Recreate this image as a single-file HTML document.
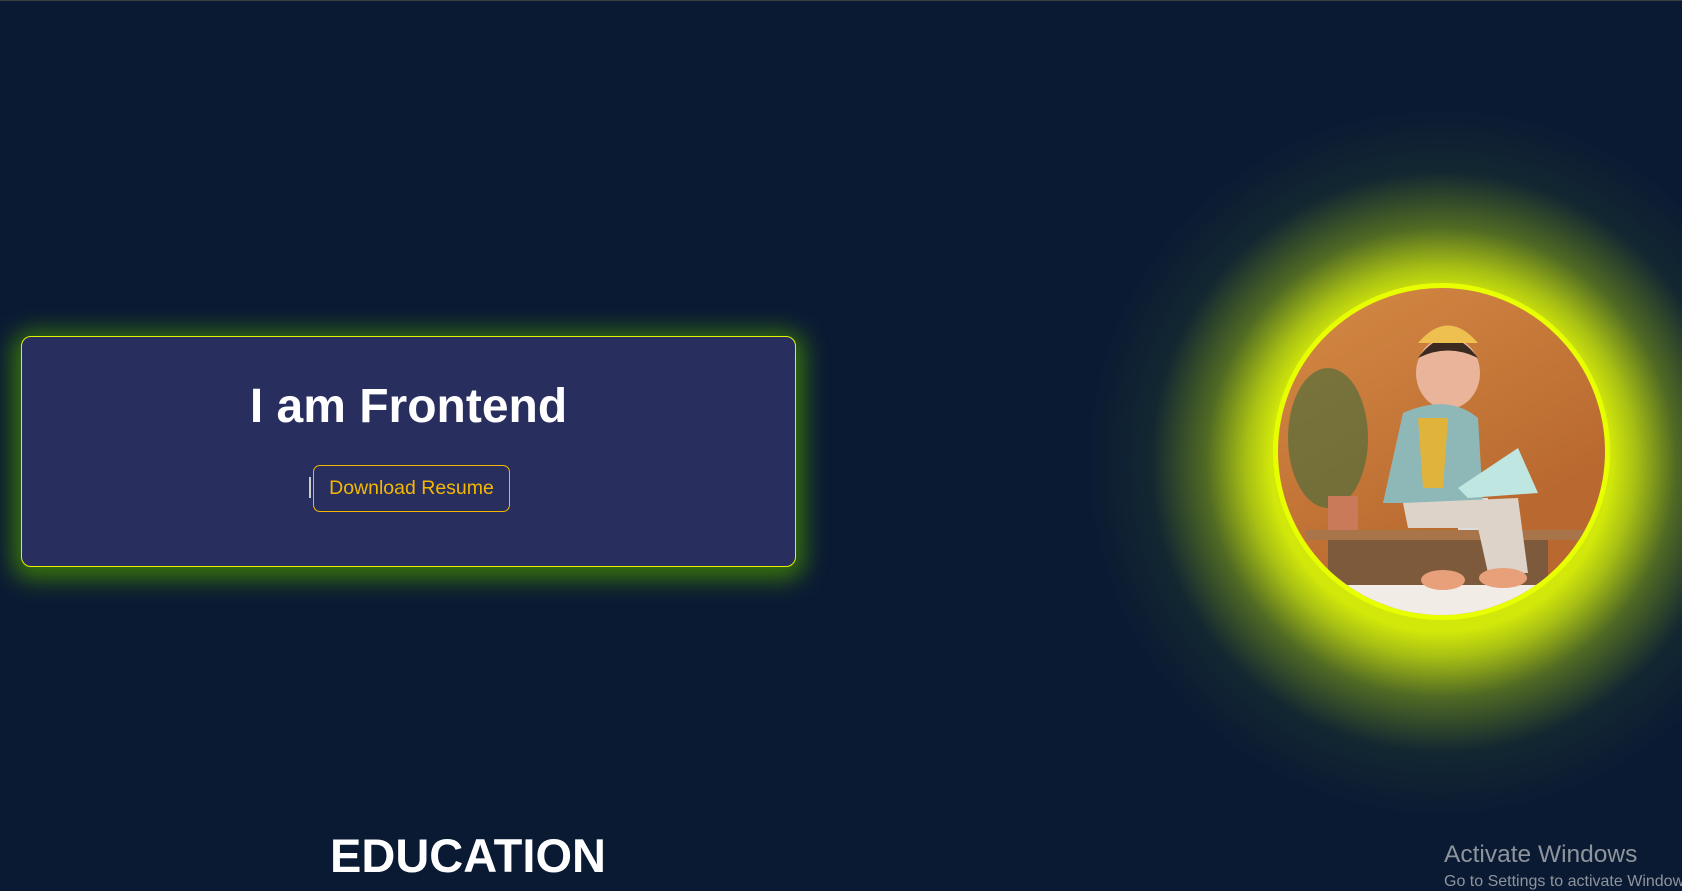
<!DOCTYPE html>
<html><head><meta charset="utf-8"><style>
html,body{margin:0;padding:0;width:1682px;height:889px;overflow:hidden;background:#0a1a33;font-family:"Liberation Sans",sans-serif;}
.top{position:absolute;left:0;top:0;width:1682px;height:1px;background:#3a4040;}
.box{position:absolute;left:21px;top:336px;width:775px;height:231px;box-sizing:border-box;background:#282f5f;border:1px solid #e6f000;border-radius:10px;box-shadow:0 4px 24px 8px rgba(70,140,0,0.8);}
h1{position:absolute;left:0;width:100%;top:42px;margin:0;text-align:center;color:#fff;font-size:48px;font-weight:600;}
.btn{position:absolute;left:291px;top:128px;width:197px;height:47px;box-sizing:border-box;border:1px solid #f5b800;border-radius:7px;color:#f5b800;font-size:19.5px;line-height:45px;text-align:center;}
.cur{position:absolute;left:287px;top:140px;width:2px;height:21px;background:#ccc;}
.glow{position:absolute;left:1041px;top:62px;width:800px;height:800px;background:radial-gradient(circle at center,rgba(215,235,10,1) 0px,rgba(210,232,10,1) 170px,rgba(195,220,15,0.85) 195px,rgba(150,185,20,0.5) 235px,rgba(60,100,40,0.18) 290px,rgba(10,26,51,0) 355px);}
.circ{position:absolute;left:1273px;top:283px;width:337px;height:337px;box-sizing:border-box;border-radius:50%;border:5px solid #e8ff00;overflow:hidden;background:linear-gradient(150deg,#d58a45,#b9692f 70%);}
.edu{position:absolute;left:0;width:936px;top:828px;text-align:center;color:#fff;font-size:47px;font-weight:700;}
.aw{position:absolute;left:1444px;top:841px;color:#8e949c;font-size:24.5px;}
.aw2{position:absolute;left:1444px;top:873px;color:#8e949c;font-size:16px;white-space:nowrap;}
</style></head><body>
<div class="top"></div>
<div class="glow"></div>
<div class="circ">
<svg width="337" height="337" viewBox="0 0 337 337">
<ellipse cx="50" cy="150" rx="40" ry="70" fill="#3f6a3a" opacity=".6"/>
<rect x="0" y="290" width="337" height="60" fill="#f2ece6"/>
<rect x="28" y="242" width="280" height="10" fill="#a8754a"/>
<rect x="50" y="252" width="220" height="45" fill="#7e5a3c"/>
<rect x="50" y="208" width="30" height="34" fill="#c97a58"/>
<rect x="180" y="210" width="30" height="32" fill="#ddd"/>
<ellipse cx="170" cy="85" rx="32" ry="36" fill="#e9b49a"/>
<path d="M140 70 Q170 30 200 70 Q170 55 140 70Z" fill="#3a2a20"/>
<path d="M140 55 Q170 20 200 55Z" fill="#eec050"/>
<path d="M105 215 L125 125 Q170 105 200 130 L205 215Z" fill="#8eb8b8"/>
<path d="M140 130 L170 130 L165 200 L145 200Z" fill="#e0b43a"/>
<path d="M125 215 L240 210 L250 285 L210 285 L200 240 L130 240Z" fill="#ddd3c8"/>
<path d="M180 200 L240 160 L260 205 L190 210Z" fill="#bfe6e0"/>
<ellipse cx="225" cy="290" rx="24" ry="10" fill="#e8a07a"/>
<ellipse cx="165" cy="292" rx="22" ry="10" fill="#e8a07a"/>
</svg>
</div>
<div class="box"><h1>I am Frontend</h1><div class="cur"></div><div class="btn">Download Resume</div></div>
<div class="edu">EDUCATION</div>
<div class="aw">Activate Windows</div>
<div class="aw2">Go to Settings to activate Windows.</div>
</body></html>
